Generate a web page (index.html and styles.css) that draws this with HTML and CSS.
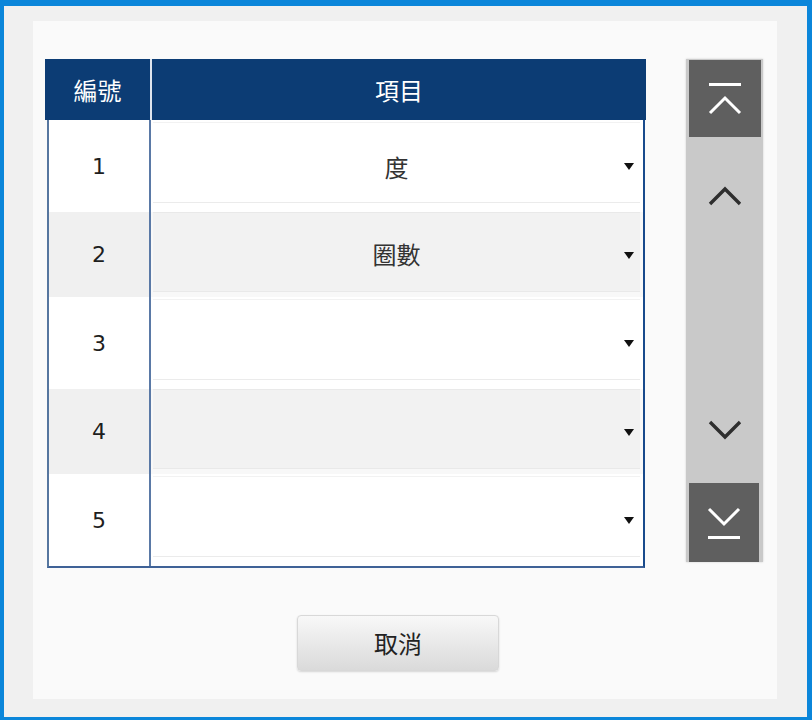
FILE: index.html
```html
<!DOCTYPE html>
<html lang="zh-Hant">
<head>
  <meta charset="UTF-8" />
  <meta name="viewport" content="width=device-width, initial-scale=1.0"/>
  <title>項目設定</title>
  <link rel="stylesheet" href="styles.css">
</head>
<body>
  <div class="window">
    <div class="panel">
      <div class="list-area">
        <div class="item-table">
          <div class="table-head">
            <div class="th th-no">編號</div>
            <div class="th">項目</div>
          </div>
          <div class="table-body">
            <div class="row row-odd">
              <div class="cell-no">1</div>
              <div class="cell-item"><div class="picker"><span class="picker-value">度</span><span class="caret"></span></div></div>
            </div>
            <div class="row row-even">
              <div class="cell-no">2</div>
              <div class="cell-item"><div class="picker"><span class="picker-value">圈數</span><span class="caret"></span></div></div>
            </div>
            <div class="row row-odd">
              <div class="cell-no">3</div>
              <div class="cell-item"><div class="picker"><span class="picker-value"></span><span class="caret"></span></div></div>
            </div>
            <div class="row row-even">
              <div class="cell-no">4</div>
              <div class="cell-item"><div class="picker"><span class="picker-value"></span><span class="caret"></span></div></div>
            </div>
            <div class="row row-odd">
              <div class="cell-no">5</div>
              <div class="cell-item"><div class="picker"><span class="picker-value"></span><span class="caret"></span></div></div>
            </div>
          </div>
        </div>

        <div class="scroller">
          <div class="scroll-btn scroll-end">
            <svg width="36" height="34" viewBox="0 0 36 34"><path d="M2 2.5H34M3 31L18 16L33 31" fill="none" stroke="#fff" stroke-width="3"/></svg>
          </div>
          <div class="scroll-step page-up">
            <svg width="34" height="20" viewBox="0 0 34 20"><path d="M2 18L17 3L32 18" fill="none" stroke="#2e2e2e" stroke-width="3.4"/></svg>
          </div>
          <div class="scroll-space"></div>
          <div class="scroll-step page-down">
            <svg width="34" height="20" viewBox="0 0 34 20"><path d="M2 2L17 17L32 2" fill="none" stroke="#2e2e2e" stroke-width="3.4"/></svg>
          </div>
          <div class="scroll-btn scroll-end scroll-bottom">
            <svg width="36" height="34" viewBox="0 0 36 34"><path d="M3 3L18 18L33 3M2 31.5H34" fill="none" stroke="#fff" stroke-width="3"/></svg>
          </div>
        </div>
      </div>

      <button class="cancel-btn">取消</button>
    </div>
  </div>
</body>
</html>
```

FILE: styles.css
```css
body {
  margin: 0;
  font-family: "Noto Sans CJK TC", "Noto Sans", sans-serif;
}

.window {
  box-sizing: border-box;
  width: 812px;
  height: 720px;
  border-style: solid;
  border-color: #0b86da;
  border-width: 6px 5px 3px 4px;
  background: #f0f0f0;
  padding: 15px 30px 18px 29px;
}

.panel {
  height: 100%;
  background: #fafafa;
  padding: 38px 0 0 12px;
  box-sizing: border-box;
}

.list-area {
  display: flex;
  align-items: flex-start;
}

.item-table {
  width: 601px;
}

.table-head {
  display: flex;
  height: 61px;
  background: #0c3c74;
  color: #fff;
  font-size: 24px;
}

.th {
  flex: 1;
  display: flex;
  align-items: center;
  justify-content: center;
}

.th-no {
  flex: 0 0 105px;
  border-right: 2px solid #dfe5ee;
}

.table-body {
  margin: 0 1px 0 2px;
  border-style: solid;
  border-width: 0 2px 2px 2px;
  border-color: #1a4b8c #184a8c #3f6297 #56769f;
}

.row {
  display: flex;
  height: 92px;
}

.row-even {
  height: 85px;
}

.cell-no {
  flex: 0 0 100px;
  display: flex;
  align-items: center;
  justify-content: center;
  border-right: 2px solid #5a79a6;
  font-family: "DejaVu Sans", sans-serif;
  font-size: 22px;
  color: #1e1e1e;
}

.row-odd .cell-no {
  background: #fff;
}

.row-even .cell-no {
  background: #f0f0f0;
}

.cell-item {
  flex: 1;
  display: flex;
  background: #fff;
}

.row-even .cell-item {
  background: #f8f8f8;
}

.picker {
  flex: 1;
  position: relative;
  margin: 2px 3px 9px 2px;
  padding-top: 7px;
  border-top: 1px solid #f2f2f2;
  border-bottom: 1px solid #ebebeb;
  display: flex;
  align-items: center;
  justify-content: center;
  font-size: 24px;
  color: #333;
}

.row-even .picker {
  margin: 0 3px 5px 2px;
  padding-top: 2px;
  background: #f2f2f2;
  border-color: #e9e9e9;
}

.caret {
  position: absolute;
  right: 6px;
  top: 50%;
  margin-top: 0;
  border-left: 5px solid transparent;
  border-right: 5px solid transparent;
  border-top: 7px solid #111;
}

.scroller {
  margin-left: 40px;
  width: 77px;
  height: 503px;
  box-sizing: border-box;
  padding: 1px 2px 0 3px;
  background: #c9c9c9;
  box-shadow: 0 0 2px rgba(0,0,0,0.18);
  display: flex;
  flex-direction: column;
}

.scroll-btn {
  height: 77px;
  background: #5f5f5f;
  display: flex;
  align-items: center;
  justify-content: center;
}

.scroll-bottom {
  height: 79px;
  margin-right: 2px;
}

.scroll-step {
  display: flex;
  align-items: center;
  justify-content: center;
}

.page-up {
  height: 118px;
}

.page-down {
  height: 106px;
}

.scroll-space {
  flex: 1;
}

.cancel-btn {
  display: block;
  margin: 47px 0 0 252px;
  width: 202px;
  height: 56px;
  padding-bottom: 2px;
  border: 1px solid #d8d8d8;
  border-radius: 4px;
  background: linear-gradient(#f8f8f8, #dadada);
  box-shadow: 0 1px 2px rgba(0,0,0,0.15);
  font-family: "Noto Sans CJK TC", sans-serif;
  font-size: 24px;
  color: #222;
  cursor: pointer;
}
```
